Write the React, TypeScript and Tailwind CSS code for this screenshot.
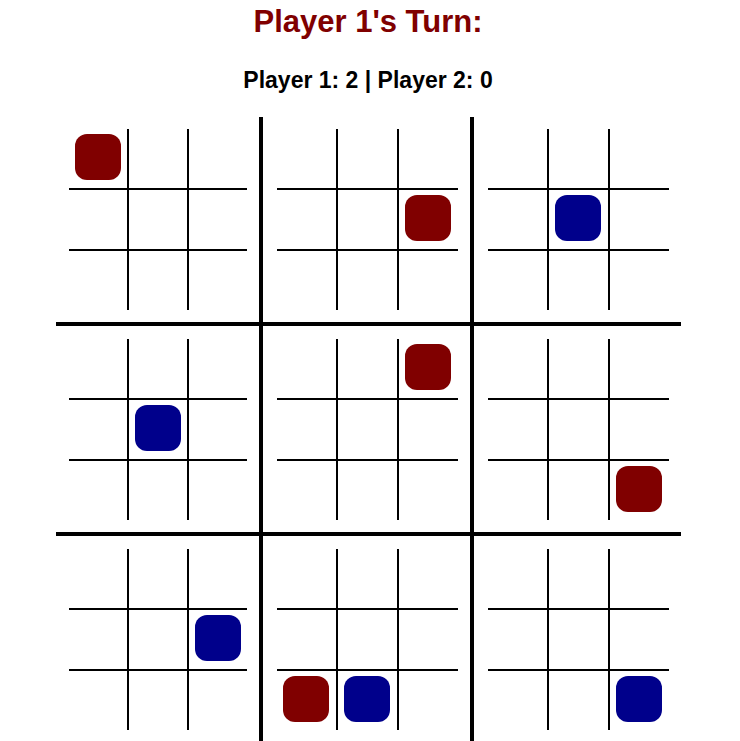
type Piece = "red" | "blue" | null;

// boards[bigIndex][smallIndex]
const boards: Piece[][] = [
  ["red", null, null, null, null, null, null, null, null],
  [null, null, null, null, null, "red", null, null, null],
  [null, null, null, null, "blue", null, null, null, null],
  [null, null, null, null, "blue", null, null, null, null],
  [null, null, "red", null, null, null, null, null, null],
  [null, null, null, null, null, null, null, null, "red"],
  [null, null, null, null, null, "blue", null, null, null],
  [null, null, null, null, null, null, "red", "blue", null],
  [null, null, null, null, null, null, null, null, "blue"],
];

function SmallBoard({ cells }: { cells: Piece[] }) {
  return (
    <div className="grid grid-cols-3 grid-rows-3 gap-[2px] bg-black h-[181px]">
      {cells.map((p, i) => (
        <div key={i} className="bg-white flex items-center justify-center">
          {p === "red" && <div className="w-[46px] h-[46px] mb-[4px] rounded-[12px] bg-[#800000]" />}
          {p === "blue" && <div className="w-[46px] h-[46px] mb-[4px] rounded-[12px] bg-[#00008b]" />}
        </div>
      ))}
    </div>
  );
}

export default function App() {
  return (
    <div className="h-screen overflow-hidden bg-white" style={{ fontFamily: '"Liberation Sans", Arial, sans-serif' }}>
      <div className="w-[736px] flex flex-col items-center pt-[4px]">
        <h1 className="text-[31px] leading-[36px] font-bold text-[#800000]">Player 1's Turn:</h1>
        <h2 className="mt-[27px] text-[23px] leading-[27px] font-bold text-black">
          Player 1: 2 | Player 2: 0
        </h2>

        {/* big board */}
        <div className="mt-[23px] grid grid-cols-[207px_211px_207px]">
          {boards.map((cells, i) => {
            const row = Math.floor(i / 3);
            const col = i % 3;
            return (
              <div
                key={i}
                className={[
                  "border-black pr-[12px] pb-[12px]",
                  col === 0 ? "pl-[13px]" : "pl-[14px]",
                  row === 0 ? "pt-[12px]" : "pt-[13px]",
                  col < 2 ? "border-r-4" : "",
                  row < 2 ? "border-b-4" : "",
                ].join(" ")}
              >
                <SmallBoard cells={cells} />
              </div>
            );
          })}
        </div>
      </div>
    </div>
  );
}
